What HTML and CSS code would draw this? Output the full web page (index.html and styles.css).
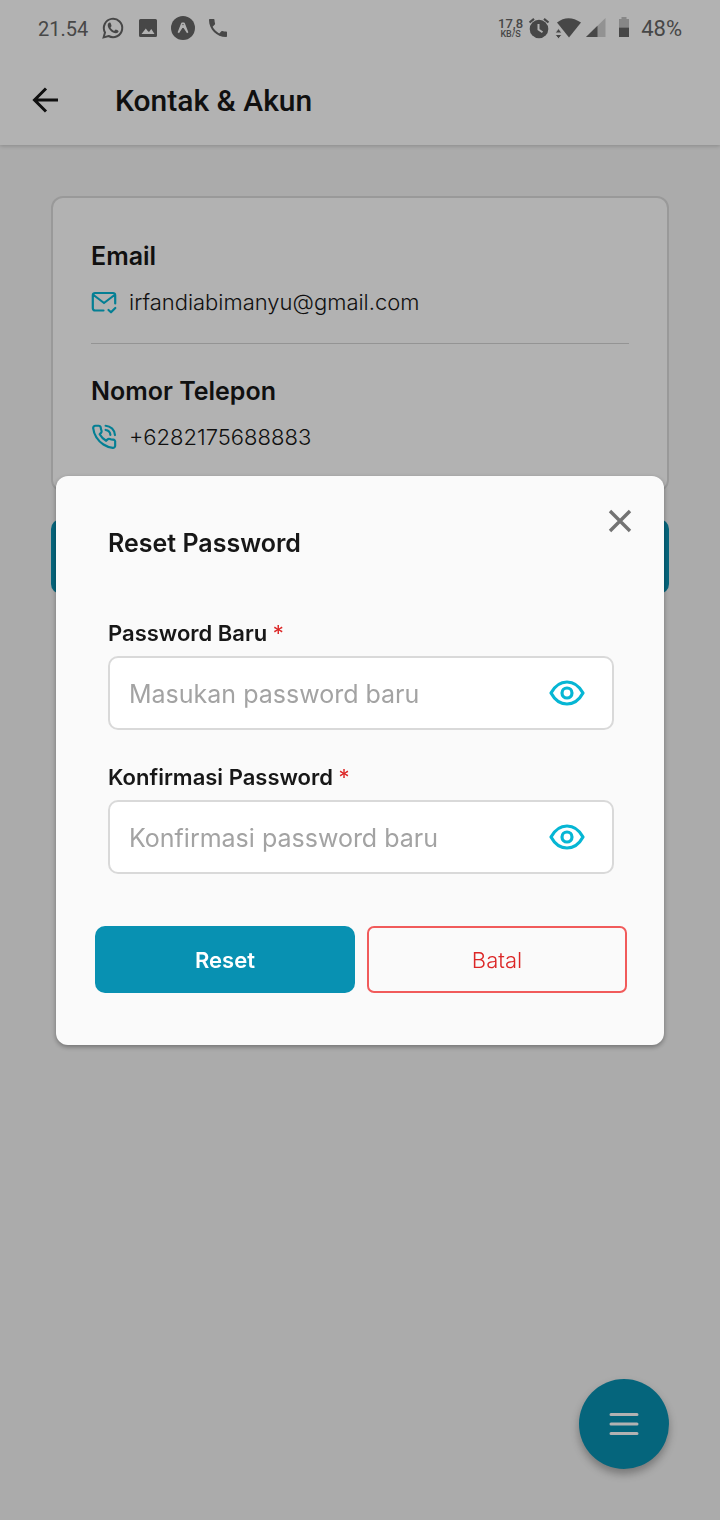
FILE: index.html
```html
<!DOCTYPE html>
<html lang="id">
<head>
<meta charset="utf-8">
<meta name="viewport" content="width=device-width, initial-scale=1">
<title>Kontak &amp; Akun</title>
<link rel="stylesheet" href="styles.css">
</head>
<body>
<div class="screen">
  <div class="top">
    <div class="status">
      <div class="status-side status-left">
        <span class="clock">21.54</span>
        <svg width="24" height="24" viewBox="0 0 24 24" fill="none" stroke="currentColor" stroke-width="2"><path d="M2.6 21.4 4 16.4A9.2 9.2 0 1 1 7.6 20Z"/><path fill="currentColor" stroke="none" d="M8.6 6.6c-.6 0-1.9.9-1.9 2.6 0 3.5 4.500 8 8.200 8 1.700 0 2.700-1.200 2.700-2.200 0-.5-2.600-1.700-2.900-1.600-.4.100-1 1.300-1.400 1.300-1 0-3.700-2.400-3.700-3.300 0-.4.900-.9.900-1.500 0-.5-.9-3-1.300-3.300Z"/></svg>
        <svg width="24" height="24" viewBox="0 0 24 24" fill="currentColor"><path fill-rule="evenodd" d="M4.500 3h15A1.500 1.500 0 0 1 21 4.500v15a1.500 1.500 0 0 1-1.500 1.500h-15A1.500 1.500 0 0 1 3 19.500v-15A1.500 1.500 0 0 1 4.500 3ZM5.500 18h13l-3.200-5-2.300 3-1.500-1.200-1.700-2.300Z"/></svg>
        <svg width="24" height="24" viewBox="1 1 24 24"><circle cx="13" cy="13" r="12" fill="currentColor"/><path class="cutout" d="M8.300 17.800 12 8.200h2l3.700 9.600M8.300 17.800 13 10.500l4.700 7.300" fill="none" stroke-width="1.600" stroke-linejoin="round"/></svg>
        <svg width="24" height="24" viewBox="0 0 24 24" fill="currentColor"><path d="M6.620 10.790c1.440 2.830 3.760 5.140 6.590 6.590l2.200-2.200c.27-.27.670-.36 1.020-.24 1.120.37 2.330.57 3.570.57.550 0 1 .45 1 1V20c0 .55-.45 1-1 1C10.610 21 3 13.390 3 4c0-.55.450-1 1-1h3.500c.55 0 1 .45 1 1 0 1.250.200 2.450.570 3.570.110.350.030.740-.250 1.020z"/></svg>
      </div>
      <div class="status-side status-right">
        <span class="speed"><b>17,8</b><small>KB/S</small></span>
        <svg width="22" height="24" viewBox="0 0 22 24"><circle cx="11" cy="13" r="9.300" fill="currentColor"/><path d="M1.500 6.500 6 2.800M20.500 6.500 16 2.800" stroke="currentColor" stroke-width="2.200"/><path class="cutout" d="M10.500 8v5.500l4 2.800" fill="none" stroke-width="2"/></svg>
        <svg width="26" height="24" viewBox="0 0 26 24" fill="currentColor"><path d="M2 6.500Q13 -2 26 6.500L14 21.500Z"/><path class="arrows" d="M0 17 3.500 12.500 7 17ZM0 18.500h7L3.500 23Z"/></svg>
        <svg width="20" height="24" viewBox="0 0 20 24" fill="currentColor"><path opacity=".3" d="M19.500 2v19H0Z"/><path d="M11.500 9.800V21H0Z"/></svg>
        <svg class="battery" width="12" height="24" viewBox="0 0 12 24" fill="currentColor"><path opacity=".4" d="M1 11.500V3h2.500V1h5v2H11v8.500Z"/><path d="M1 11.500h10V21H1Z"/></svg>
        <span class="percent">48%</span>
      </div>
    </div>
    <header class="bar">
      <button class="back" type="button" aria-label="Kembali"><svg width="28" height="28" viewBox="0 0 28 28" fill="none" stroke="currentColor" stroke-width="3"><path d="M27 13H4M15 1.500 3.500 13 15 24.500"/></svg></button>
      <h1 class="bar-title">Kontak &amp; Akun</h1>
    </header>
  </div>
  <main class="content">
    <section class="card">
      <div class="entry">
        <h2 class="heading">Email</h2>
        <p class="value"><svg width="26" height="26" viewBox="0 0 26 26" fill="none" stroke="currentColor" stroke-width="2.200" stroke-linecap="round" stroke-linejoin="round"><path d="M12.500 21.500H4a2.200 2.200 0 0 1-2.200-2.200V6.200A2.200 2.200 0 0 1 4 4h18a2.200 2.200 0 0 1 2.200 2.200V14.500M2.500 6l10.500 8 10.500-8M17.500 21l2.500 2.300L24.300 19"/></svg><span>irfandiabimanyu@gmail.com</span></p>
      </div>
      <hr class="divider">
      <div class="entry">
        <h2 class="heading">Nomor Telepon</h2>
        <p class="value"><svg width="26" height="26" viewBox="0 0 24 24" fill="none" stroke="currentColor" stroke-width="2" stroke-linecap="round" stroke-linejoin="round"><path d="M13.500 5.500a5 5 0 0 1 4.400 4.500M13.500 1.600a9 9 0 0 1 8.600 8.600M22.300 17v3a2 2 0 0 1-2.200 2A19.800 19.800 0 0 1 11.500 18.900 19.500 19.500 0 0 1 5.100 12.500 19.800 19.800 0 0 1 2 3.800 2 2 0 0 1 4 1.600h3a2 2 0 0 1 2 1.700c.130 1 .36 1.900.7 2.800a2 2 0 0 1-.45 2.100L8 9.500a16 16 0 0 0 6 6l1.300-1.300a2 2 0 0 1 2.100-.45c.9.340 1.800.57 2.800.7a2 2 0 0 1 2.100 2.550Z"/></svg><span>+6282175688883</span></p>
      </div>
    </section>
    <button class="wide-button" type="button" aria-label="Reset Password"></button>
  </main>
  <button class="fab" type="button" aria-label="Menu"><svg width="30" height="24" viewBox="0 0 30 24" fill="none" stroke="currentColor" stroke-width="3" stroke-linecap="round"><path d="M2 2.500h26M2 12h26M2 21.500h26"/></svg></button>
</div>
<div class="overlay">
  <form class="modal" role="dialog" aria-modal="true" aria-labelledby="modal-title">
    <button class="close" type="button" aria-label="Tutup"><svg width="24" height="24" viewBox="0 0 24 24" fill="none" stroke="currentColor" stroke-width="3.400"><path d="M2 2l20 20M22 2 2 22"/></svg></button>
    <h2 class="heading modal-title" id="modal-title">Reset Password</h2>
    <div class="fields">
      <div class="field">
        <label class="label" for="new-pass">Password Baru <span class="required">*</span></label>
        <div class="box">
          <input class="input" id="new-pass" type="password" placeholder="Masukan password baru">
          <button class="eye" type="button" aria-label="Tampilkan password"><svg width="36" height="28" viewBox="0 0 36 28" fill="none" stroke="currentColor" stroke-width="3.200"><path stroke-linejoin="round" d="M2 14Q8 3 18 3t16 11Q28 25 18 25T2 14Z"/><circle cx="18" cy="14" r="5"/></svg></button>
        </div>
      </div>
      <div class="field">
        <label class="label" for="confirm-pass">Konfirmasi Password <span class="required">*</span></label>
        <div class="box">
          <input class="input" id="confirm-pass" type="password" placeholder="Konfirmasi password baru">
          <button class="eye" type="button" aria-label="Tampilkan konfirmasi password"><svg width="36" height="28" viewBox="0 0 36 28" fill="none" stroke="currentColor" stroke-width="3.200"><path stroke-linejoin="round" d="M2 14Q8 3 18 3t16 11Q28 25 18 25T2 14Z"/><circle cx="18" cy="14" r="5"/></svg></button>
        </div>
      </div>
    </div>
    <div class="actions">
      <button class="action primary" type="button">Reset</button>
      <button class="action secondary" type="button">Batal</button>
    </div>
  </form>
</div>
</body>
</html>
```
FILE: styles.css
```css
* { box-sizing: border-box; }
body { margin: 0; background: #f5f5f5; color: #171717; font-family: Inter, "Liberation Sans", sans-serif; }
h1, h2, p { margin: 0; }
button { padding: 0; border: 0; background: none; color: inherit; font: inherit; cursor: pointer; }
svg { display: block; flex: none; }

.screen { min-height: 100vh; }
.top { background: #fff; box-shadow: 0 1px 4px rgba(0, 0, 0, .2); }
.status { display: flex; justify-content: space-between; height: 56px; padding: 0 38px; color: #666; font-family: Roboto, sans-serif; }
.status-side { display: flex; align-items: center; }
.status-left { gap: 11px; }
.status-right { gap: 5px; }
.clock, .percent { line-height: 24px; padding-top: 2px; }
.clock { padding-right: 2px; font-size: 20px; }
.percent { font-size: 22px; }
.cutout { stroke: #fff; }
.arrows { stroke: #fff; stroke-width: 1px; }
.speed { display: flex; flex-direction: column; align-items: center; }
.speed b { font-size: 13px; font-weight: 500; line-height: 12px; }
.speed small { font-size: 9px; font-weight: 500; line-height: 8px; }
.battery { margin: 0 6px 0 7px; }

.bar { display: flex; align-items: center; gap: 56px; padding: 24px 31px; }
.bar-title { font-family: Roboto, sans-serif; font-size: 30px; font-weight: 500; line-height: 41px; }

.content { display: flex; flex-direction: column; gap: 27px; padding: 51px; }
.card { padding: 42px 38px 37px; border: 2px solid #dcdcdc; border-radius: 12px; background: #fff; }
.heading { font-size: 25px; font-weight: 600; line-height: 32px; }
.entry { display: flex; flex-direction: column; gap: 14px; }
.value { display: flex; align-items: center; gap: 12px; font-size: 22px; font-weight: 300; line-height: 32px; }
.value svg { color: #06b6d4; }
.divider { height: 1px; margin: 25px 0 31px; border: 0; background: #d4d4d4; }
.wide-button { height: 75px; border-radius: 10px; background: #0891b2; }
.fab { position: fixed; right: 51px; bottom: 51px; display: flex; align-items: center; justify-content: center; width: 90px; height: 90px; border-radius: 50%; background: #0891b2; color: #fff; box-shadow: 0 5px 8px rgba(0, 0, 0, .3); }

.overlay { position: fixed; inset: 0; display: flex; align-items: center; padding: 0 56px; background: rgba(0, 0, 0, .3); }
.modal { position: relative; flex: 1; padding: 51px 37px 52px 39px; border-radius: 12px; background: #fafafa; box-shadow: 0 2px 5px rgba(0, 0, 0, .35); }
.close { position: absolute; top: 33px; right: 32px; color: #737373; }
.modal-title { padding: 0 13px; }
.fields { display: flex; flex-direction: column; gap: 33px; padding: 60px 13px 52px; }
.field { display: flex; flex-direction: column; gap: 9px; }
.label { font-size: 22px; font-weight: 600; line-height: 28px; }
.required { color: #dc2626; font-weight: 400; }
.box { display: flex; align-items: center; height: 74px; padding: 0 27px 0 19px; border: 2px solid #d9d9d9; border-radius: 10px; background: #fff; }
.input { flex: 1; min-width: 0; padding: 2px 0 0; border: 0; outline: 0; background: none; color: #171717; font: 400 25px/32px Inter, sans-serif; }
.input::placeholder { color: #a3a3a3; opacity: 1; }
.eye { color: #06b6d4; }
.actions { display: grid; grid-template-columns: 1fr 1fr; gap: 12px; }
.action { height: 67px; padding: 2px 0 0; border-radius: 10px; font-size: 22px; line-height: 28px; }
.primary { background: #0891b2; color: #fff; font-weight: 600; }
.secondary { border: 2px solid #f15b5b; border-radius: 7px; color: #dc2626; font-weight: 300; }
```
